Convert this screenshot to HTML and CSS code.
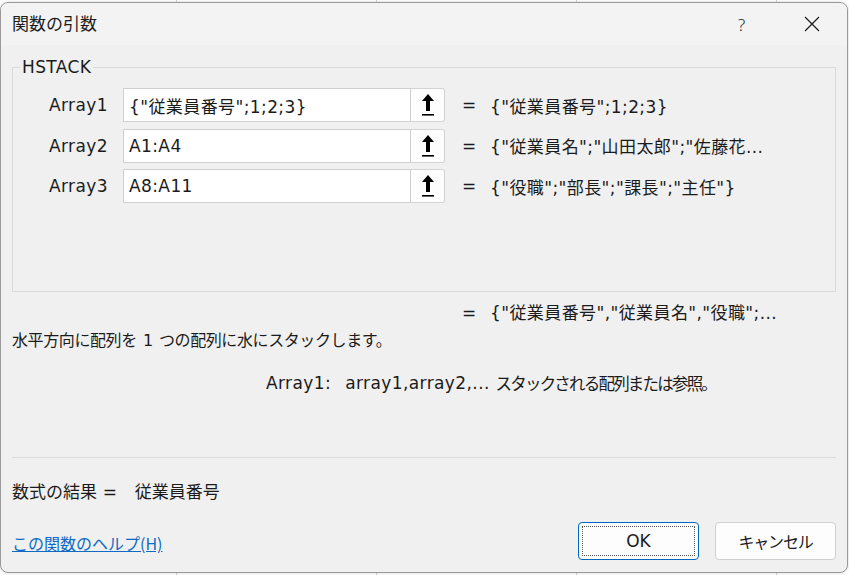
FILE: index.html
```html
<!DOCTYPE html>
<html lang="ja">
<head>
<meta charset="utf-8">
<title>関数の引数</title>
<link rel="stylesheet" href="styles.css">
</head>
<body>
<div class="dialog">
  <div class="titlebar">
    <div class="title">関数の引数</div>
    <div class="tb-help">?</div>
    <div class="tb-close">
      <svg width="16" height="16" viewBox="0 0 16 16"><path d="M1 1 L15 15 M15 1 L1 15" stroke="#1a1a1a" stroke-width="1.2" fill="none"/></svg>
    </div>
  </div>
  <div class="content">
    <fieldset class="group">
      <legend class="group-label">HSTACK</legend>
      <div class="args">
        <div class="arg-label">Array1</div>
        <div class="arg-input">{"従業員番号";1;2;3}</div>
        <div class="arg-btn"><svg width="14" height="24" viewBox="0 0 14 24"><path d="M7 1 L13 8 L9 8 L9 18 L5 18 L5 8 L1 8 Z" fill="#000"/><rect x="1" y="21" width="12" height="1.6" fill="#000"/></svg></div>
        <div class="arg-eq">=</div>
        <div class="arg-val">{"従業員番号";1;2;3}</div>

        <div class="arg-label">Array2</div>
        <div class="arg-input">A1:A4</div>
        <div class="arg-btn"><svg width="14" height="24" viewBox="0 0 14 24"><path d="M7 1 L13 8 L9 8 L9 18 L5 18 L5 8 L1 8 Z" fill="#000"/><rect x="1" y="21" width="12" height="1.6" fill="#000"/></svg></div>
        <div class="arg-eq">=</div>
        <div class="arg-val">{"従業員名";"山田太郎";"佐藤花...</div>

        <div class="arg-label">Array3</div>
        <div class="arg-input">A8:A11</div>
        <div class="arg-btn"><svg width="14" height="24" viewBox="0 0 14 24"><path d="M7 1 L13 8 L9 8 L9 18 L5 18 L5 8 L1 8 Z" fill="#000"/><rect x="1" y="21" width="12" height="1.6" fill="#000"/></svg></div>
        <div class="arg-eq">=</div>
        <div class="arg-val">{"役職";"部長";"課長";"主任"}</div>
      </div>
    </fieldset>
    <div class="result-line"><span class="res-eq">=</span><span>{"従業員番号","従業員名","役職";...</span></div>
    <div class="desc">水平方向に配列を <span class="num">1</span> つの配列に水にスタックします。</div>
    <div class="arg-help"><span class="arg-help-name">Array1:</span><span>array1,array2,... </span><span class="ja">スタックされる配列または参照。</span></div>
    <div class="spacer"></div>
    <div class="sep"></div>
    <div class="formula"><span class="ja">数式の結果</span> =&nbsp;&nbsp;&nbsp;<span class="ja">従業員番号</span></div>
    <div class="footer">
      <a class="help-link" href="#">この関数のヘルプ(H)</a>
      <div class="buttons">
        <button class="btn btn-ok"><span class="focus">OK</span></button>
        <button class="btn btn-cancel">キャンセル</button>
      </div>
    </div>
  </div>
</div>
</body>
</html>
```

FILE: styles.css
```css
* { box-sizing: border-box; }
html, body { margin: 0; padding: 0; }
body {
  width: 849px;
  height: 575px;
  overflow: hidden;
  background-color: #ffffff;
  background-image: repeating-linear-gradient(90deg, transparent 0, transparent 176px, #d4d4d4 176px, #d4d4d4 177px, transparent 177px, transparent 200px);
  font-family: "DejaVu Sans", "Noto Sans CJK JP", sans-serif;
  font-size: 17px;
  letter-spacing: 0.4px;
  color: #1b1b1b;
  padding-top: 2px;
}
.dialog {
  width: 848px;
  height: 571px;
  background: #f0f0f0;
  border: 1px solid #9a9a9a;
  border-radius: 8px;
  display: flex;
  flex-direction: column;
  overflow: hidden;
  box-shadow: 0 0 3px rgba(0,0,0,0.2);
}
.titlebar {
  height: 42px;
  flex: none;
  display: flex;
  align-items: center;
  background: #f3f3f3;
  padding-left: 11px;
}
.title {
  font-family: "Noto Sans CJK JP", sans-serif;
  font-size: 17px;
  letter-spacing: 0;
  flex: 1;
  line-height: 20px;
  padding-bottom: 2px;
}
.tb-help {
  font-family: "Noto Sans", sans-serif;
  font-size: 17px;
  width: 20px;
  margin-right: 46px;
  font-weight: 300;
  color: #222;
}
.tb-close {
  width: 16px;
  height: 16px;
  margin-right: 27px;
  display: flex;
}
.content {
  flex: 1;
  display: flex;
  flex-direction: column;
  padding: 0 11px 0 11px;
}
.group {
  margin: 11px 0 0 0;
  padding: 10px 0 0 0;
  border: 1px solid #dadada;
  height: 236px;
  min-width: 0;
}
.group-label {
  padding: 0 2px;
  margin-left: 7px;
  line-height: 22px;
}
.args {
  display: grid;
  grid-template-columns: 95px 303px 34px 45px 1fr;
  grid-auto-rows: 34px;
  row-gap: 6.5px;
  align-items: center;
}
.arg-label {
  text-align: right;
  white-space: nowrap;
}
.arg-input {
  margin-left: 15px;
  height: 34px;
  background: #fff;
  border: 1px solid #cfcfcf;
  display: flex;
  align-items: center;
  padding-left: 5px;
  white-space: nowrap;
  overflow: hidden;
}
.arg-btn {
  height: 34px;
  background: #fdfdfd;
  border: 1px solid #d3d3d3;
  border-left: none;
  border-radius: 0 3px 3px 0;
  display: flex;
  align-items: center;
  justify-content: center;
}
.arg-eq { padding-left: 17px; }
.arg-val { white-space: nowrap; }
.result-line {
  margin-top: 10px;
  padding-left: 450px;
  display: flex;
  line-height: 22px;
  white-space: nowrap;
}
.res-eq { width: 28px; }
.desc {
  margin-top: 4px;
  line-height: 22px;
  font-family: "Noto Sans CJK JP", sans-serif;
  font-size: 16px;
  letter-spacing: -0.4px;
  white-space: pre;
}
.desc .num { font-family: "DejaVu Sans", sans-serif; margin: 0 3px; }
.arg-help {
  margin-top: 20px;
  padding-left: 254px;
  line-height: 22px;
  display: flex;
  white-space: pre;
}
.arg-help-name { margin-right: 14px; }
.ja {
  font-family: "Noto Sans CJK JP", sans-serif;
  letter-spacing: 0;
}
.arg-help .ja { font-size: 16.5px; letter-spacing: -1.8px; }
.spacer { flex: 1; }
.sep {
  height: 1px;
  background: #dcdcdc;
  flex: none;
}
.formula {
  margin-top: 22px;
  line-height: 22px;
}
.footer {
  margin-top: 19px;
  height: 50px;
  display: flex;
  align-items: flex-start;
  justify-content: space-between;
}
.help-link {
  margin-top: 10px;
  color: #0d6bc6;
  text-decoration: underline;
  line-height: 22px;
  font-family: "Noto Sans CJK JP", sans-serif;
  font-size: 16px;
  letter-spacing: 0;
}
.buttons {
  display: flex;
  gap: 16px;
}
.btn {
  width: 121px;
  height: 38px;
  font-family: "DejaVu Sans", "Noto Sans CJK JP", sans-serif;
  font-size: 17px;
  color: #1b1b1b;
  background: #fdfdfd;
  border: 1px solid #d0d0d0;
  border-radius: 4px;
  padding: 0;
}
.btn-cancel {
  font-family: "Noto Sans CJK JP", sans-serif;
  font-size: 16px;
  letter-spacing: -1.2px;
}
.btn-ok {
  border: 1px solid #0067c0;
  padding: 3px;
}
.focus {
  display: flex;
  width: 100%;
  height: 100%;
  align-items: center;
  justify-content: center;
  border: 1px dotted #555;
}
```
